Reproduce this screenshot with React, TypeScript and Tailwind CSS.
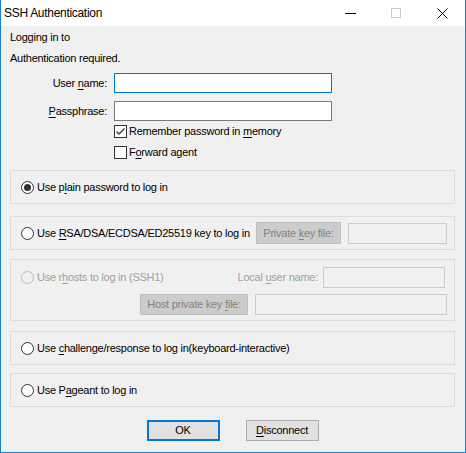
import type { ReactNode } from "react";

function U({ children }: { children: ReactNode }) {
  return <span className="underline underline-offset-[2px] decoration-[1px]">{children}</span>;
}

function Radio({ checked = false, disabled = false }: { checked?: boolean; disabled?: boolean }) {
  return (
    <span
      className={`w-[13px] h-[13px] rounded-full border flex items-center justify-center shrink-0 ${
        disabled ? "border-[#bcbcbc] bg-[#f0f0f0]" : "border-[#333333] bg-white"
      }`}
    >
      {checked && <span className="w-[7px] h-[7px] rounded-full bg-[#333333]" />}
    </span>
  );
}

function Checkbox({ checked = false }: { checked?: boolean }) {
  return (
    <span className="w-[13px] h-[13px] border border-[#333333] bg-white flex items-center justify-center shrink-0">
      {checked && (
        <svg width="11" height="11" viewBox="0 0 11 11">
          <path d="M1.5 5.5 L4 8 L9.5 2.5" stroke="#333333" strokeWidth="1.3" fill="none" />
        </svg>
      )}
    </span>
  );
}

function GroupBox({ className = "", children }: { className?: string; children: ReactNode }) {
  return <div className={`border border-[#dcdcdc] ${className}`}>{children}</div>;
}

function DisabledBtn({ className = "", children }: { className?: string; children: ReactNode }) {
  return (
    <div className={`bg-[#cccccc] border border-[#bfbfbf] text-[#838383] flex items-center justify-center shrink-0 ${className}`}>
      {children}
    </div>
  );
}

function DisabledField({ className = "" }: { className?: string }) {
  return <div className={`border border-[#cccccc] bg-[#f0f0f0] shrink-0 ${className}`} />;
}

export default function App() {
  return (
    <div className="w-[466px] h-[453px] bg-[#f0f0f0] border-x border-b border-[#1883d7] text-[11px] tracking-[-0.25px] whitespace-nowrap text-black font-['Liberation_Sans',Arial,sans-serif] flex flex-col">
      {/* title bar */}
      <div className="h-[26px] bg-white flex items-center shrink-0 relative">
        <span className="ml-[3px] text-[12px] tracking-[-0.3px]">SSH Authentication</span>
        <div className="ml-auto flex items-center h-full">
          <div className="w-[46px] h-full flex items-center justify-center">
            <svg width="11" height="11" viewBox="0 0 11 11">
              <path d="M0 5.5 H11" stroke="#000" strokeWidth="1" />
            </svg>
          </div>
          <div className="w-[46px] h-full flex items-center justify-center">
            <svg width="10" height="10" viewBox="0 0 10 10">
              <rect x="0.5" y="0.5" width="9" height="9" stroke="#cccccc" fill="none" />
            </svg>
          </div>
          <div className="w-[46px] h-full flex items-center justify-center">
            <svg width="11" height="11" viewBox="0 0 11 11">
              <path d="M0.5 0.5 L10.5 10.5 M10.5 0.5 L0.5 10.5" stroke="#000" strokeWidth="1" />
            </svg>
          </div>
        </div>
      </div>

      <div className="flex flex-col pl-[9px] pr-[10px]">
        <div className="mt-[1px] h-[21px] flex items-center">Logging in to</div>
        <div className="h-[21px] flex items-center">Authentication required.</div>

        <div className="mt-[4px] h-[20px] flex items-center">
          <span className="w-[97px] text-right">
            User <U>n</U>ame:
          </span>
          <div className="ml-[7px] w-[218px] h-[20px] border border-[#0078d7] bg-white" />
        </div>
        <div className="mt-[8px] h-[20px] flex items-center">
          <span className="w-[97px] text-right">
            <U>P</U>assphrase:
          </span>
          <div className="ml-[7px] w-[218px] h-[20px] border border-[#7a7a7a] bg-white" />
        </div>

        <div className="mt-[4px] h-[13px] flex items-center pl-[104px] gap-[2px]">
          <Checkbox checked />
          <span>
            Remember password in <U>m</U>emory
          </span>
        </div>
        <div className="mt-[8px] h-[13px] flex items-center pl-[104px] gap-[2px]">
          <Checkbox />
          <span>
            F<U>o</U>rward agent
          </span>
        </div>

        <GroupBox className="mt-[11px] h-[34px] flex items-center pl-[10px] gap-[3px]">
          <Radio checked />
          <span>
            Use p<U>l</U>ain password to log in
          </span>
        </GroupBox>

        <GroupBox className="mt-[12px] h-[34px] flex items-center pl-[10px] pr-[7px]">
          <Radio />
          <span className="ml-[3px]">
            Use <U>R</U>SA/DSA/ECDSA/ED25519 key to log in
          </span>
          <DisabledBtn className="ml-auto w-[85px] h-[22px]">
            <span>
              Private <U>k</U>ey file:
            </span>
          </DisabledBtn>
          <DisabledField className="ml-[7px] w-[99px] h-[21px]" />
        </GroupBox>

        <GroupBox className="mt-[9px] h-[62px] flex flex-col pt-[7px]">
          <div className="h-[21px] flex items-center pl-[10px] pr-[9px] text-[#a0a0a0]">
            <Radio disabled />
            <span className="ml-[3px]">
              Use r<U>h</U>osts to log in (SSH1)
            </span>
            <span className="ml-auto">
              Local <U>u</U>ser name:
            </span>
            <DisabledField className="ml-[5px] w-[122px] h-[21px]" />
          </div>
          <div className="mt-[6px] h-[21px] flex items-center justify-end pr-[7px]">
            <DisabledBtn className="w-[108px] h-[21px]">
              <span>
                Host private key <U>f</U>ile:
              </span>
            </DisabledBtn>
            <DisabledField className="ml-[7px] w-[192px] h-[21px]" />
          </div>
        </GroupBox>

        <GroupBox className="mt-[10px] h-[34px] flex items-center pl-[10px] gap-[3px]">
          <Radio />
          <span>
            Use <U>c</U>hallenge/response to log in(keyboard-interactive)
          </span>
        </GroupBox>

        <GroupBox className="mt-[8px] h-[34px] flex items-center pl-[10px] gap-[3px]">
          <Radio />
          <span>
            Use P<U>a</U>geant to log in
          </span>
        </GroupBox>

        <div className="mt-[13px] flex justify-center gap-[26px]">
          <button className="w-[73px] h-[21px] bg-[#e1e1e1] border-2 border-[#0078d7] flex items-center justify-center">
            OK
          </button>
          <button className="w-[73px] h-[21px] bg-[#e1e1e1] border border-[#adadad] flex items-center justify-center">
            <span>
              <U>D</U>isconnect
            </span>
          </button>
        </div>
      </div>
    </div>
  );
}
